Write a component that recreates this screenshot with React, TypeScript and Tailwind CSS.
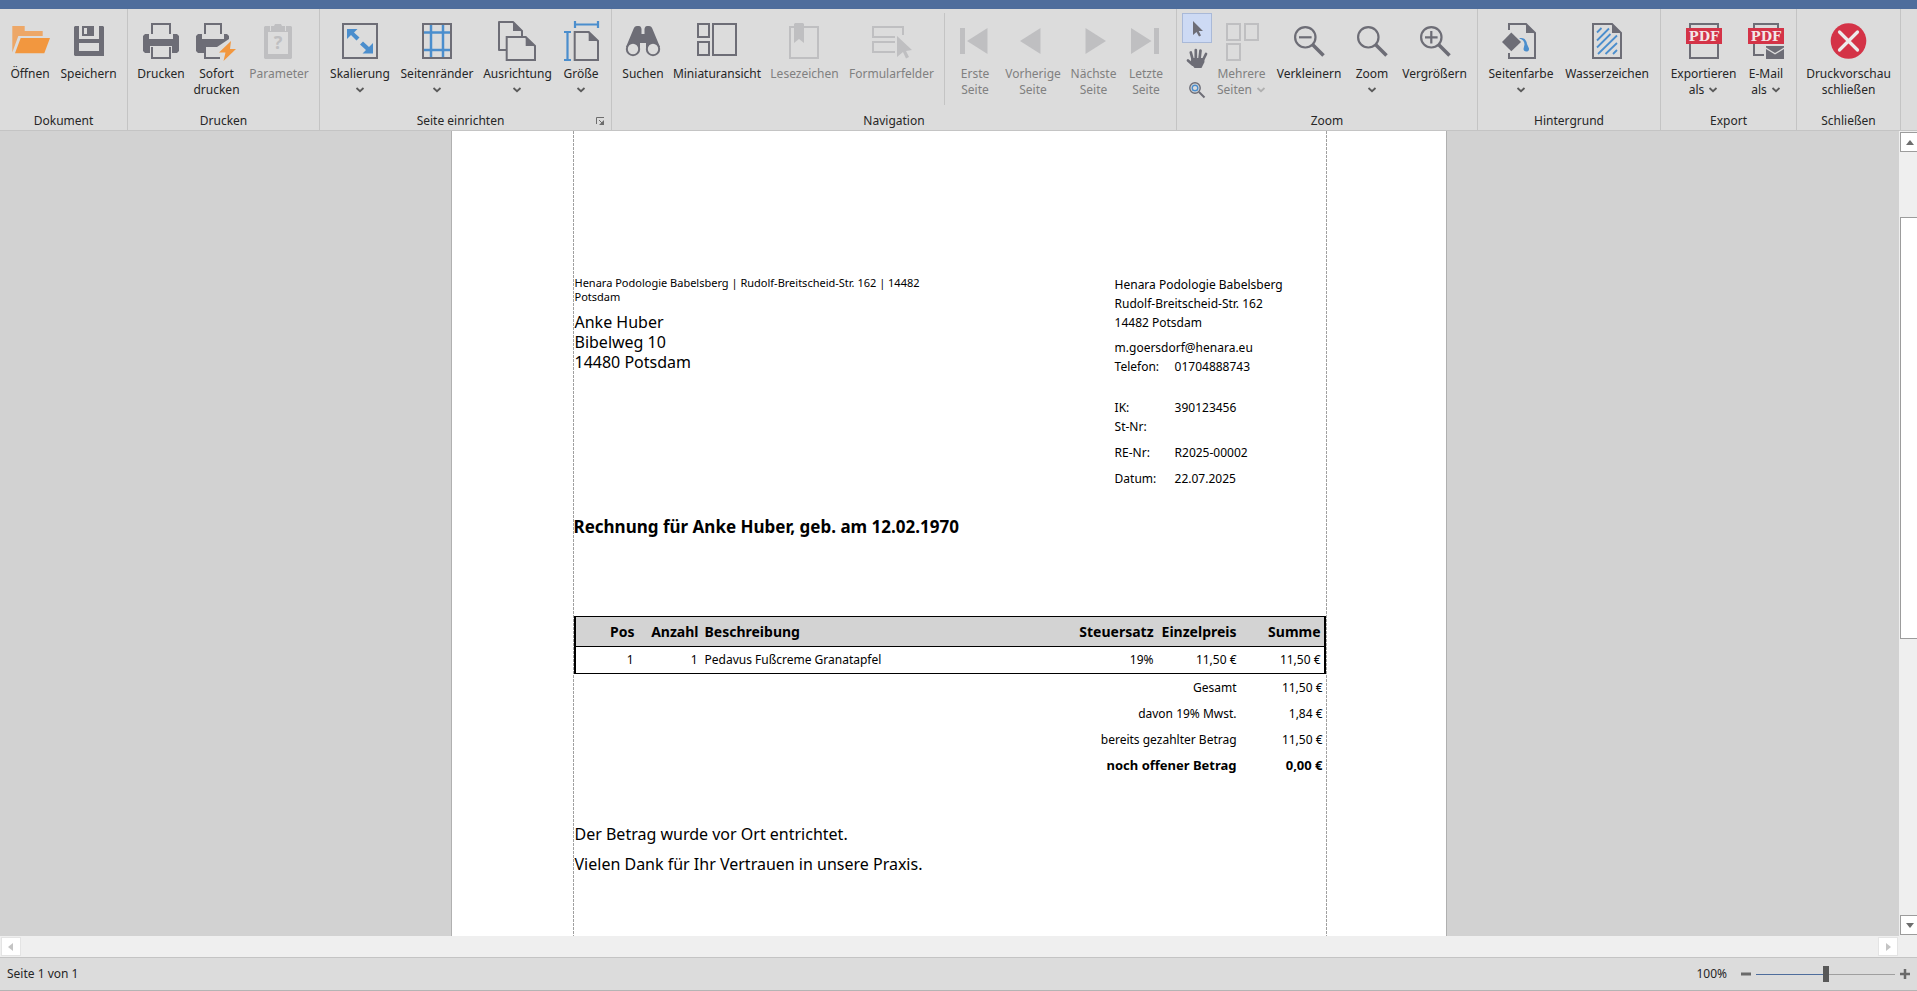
import React from "react";
import clsx from "clsx";

type Props = { children?: React.ReactNode };

const DARK = "#6d6d76";
const LIGHT = "#bfbfc1";
const BLUE = "#4b8ecd";
const RED = "#d43347";
const ORANGE = "#f2973f";

const Svg = ({ children }: Props) => (
  <svg
    viewBox="0 0 40 40"
    className="h-10 w-10 shrink-0 overflow-visible"
    fill="none"
    aria-hidden="true"
  >
    {children}
  </svg>
);

const OpenIcon = () => (
  <Svg>
    <path d="M2.3 5h12.4v5h18v5H8.3l-6 16.5z" fill="#eda767" />
    <path d="M10.7 17H40l-5.7 15.3H5z" fill={ORANGE} />
  </Svg>
);

const SaveIcon = () => (
  <Svg>
    <path
      fill={DARK}
      fillRule="evenodd"
      d="M6 5h4v13h20V5h4l1 1v29H6l-1-1V6zM10 22v8h20v-8z"
    />
    <path fill={DARK} fillRule="evenodd" d="M13 5h12v10H13zM15 7v6h3V7z" />
  </Svg>
);

const PrintIcon = () => (
  <Svg>
    <path d="M11 13V3h18v10" stroke={DARK} strokeWidth="2" />
    <path
      fill={DARK}
      fillRule="evenodd"
      d="M4 13h4v5h24v-5h4l2 2v15l-2 2h-5v-7H9v7H4l-2-2V15z"
    />
    <path d="M11 26v11h18V26" stroke={DARK} strokeWidth="2" />
  </Svg>
);

const QuickPrintIcon = () => (
  <Svg>
    <path d="M8 13V3h16v10" stroke={DARK} strokeWidth="2" />
    <path
      fill={DARK}
      d="M1 13h4v5h22v-5h3l2 2v3l-12 8H7v6H1l-2-2V15z"
    />
    <path d="M8 26v11h15" stroke={DARK} strokeWidth="2" />
    <path d="M34 20 22 31.500h6.500L26.500 40 39 28h-6z" fill={ORANGE} />
  </Svg>
);

const ParameterIcon = () => (
  <Svg>
    <path
      fill={LIGHT}
      fillRule="evenodd"
      d="M6 5h5v5h16V5h5l1 1v31l-1 1H6l-1-1V6zM9 11v22h20V11z"
    />
    <path fill={LIGHT} d="M12 5h3l1-2h6l1 2h3v5H12z" />
    <text
      x="19"
      y="28"
      textAnchor="middle"
      fill={LIGHT}
      className="font-['Noto_Sans',sans-serif] text-[18px] font-bold"
    >
      ?
    </text>
  </Svg>
);

const ScaleIcon = () => (
  <Svg>
    <rect x="3" y="3" width="34" height="34" stroke={DARK} strokeWidth="2" />
    <path
      fill={BLUE}
      d="M7 8h10.500l-3.500 3.500 5.500 5-3 3-5.500-5.500L7 18zM33 32.500H22.500l3.500-3.500-6-5.500 3-3 6 5.500 4-4z"
    />
  </Svg>
);

const MarginsIcon = () => (
  <Svg>
    <path
      d="M14 3v34M26 3v34M6 11.500h28M6 29h28"
      stroke={BLUE}
      strokeWidth="2.500"
    />
    <rect x="6" y="3" width="28" height="34" stroke={DARK} strokeWidth="2" />
  </Svg>
);

const OrientationIcon = () => (
  <Svg>
    <path
      d="M9 29H1V1h14l9 9v6"
      stroke={DARK}
      strokeWidth="2"
      strokeLinejoin="round"
    />
    <path d="M15 1v9h9z" fill={DARK} />
    <path d="M8.700 16h19L37 25v14H8.700z" stroke={DARK} strokeWidth="2" />
    <path d="M27.700 16v9H37z" fill={DARK} />
  </Svg>
);

const SizeIcon = () => (
  <Svg>
    <path d="M13.700 11h14L37 20v19H13.700z" stroke={DARK} strokeWidth="2" />
    <path d="M27.700 11v9H37z" fill={DARK} />
    <path
      d="M14 0v7M37 0v7M14 3.500h23M3 11h7M3 39h7M6.500 11v28"
      stroke={BLUE}
      strokeWidth="2.200"
    />
  </Svg>
);

const SearchIcon = () => (
  <Svg>
    <path
      fill={DARK}
      d="M3 26 10.500 8Q11.500 5 14 5h2q2 0 2.500 3v5h3V8q.5-3 2.500-3h2q2.500 0 3.500 3L37 26l-14 1v-5h-6v5z"
    />
    <circle cx="10" cy="28" r="6.200" fill="#dcdcdc" stroke={DARK} strokeWidth="2" />
    <circle cx="30" cy="28" r="6.200" fill="#dcdcdc" stroke={DARK} strokeWidth="2" />
  </Svg>
);

const ThumbnailsIcon = () => (
  <Svg>
    <g stroke={DARK} strokeWidth="2">
      <rect x="1" y="3" width="11" height="13" />
      <rect x="1" y="21" width="11" height="13" />
      <rect x="16" y="3" width="23" height="31" />
    </g>
  </Svg>
);

const BookmarkIcon = () => (
  <Svg>
    <rect x="5" y="6" width="28" height="31" stroke={LIGHT} strokeWidth="2" />
    <path d="M9 3l1-1h8l1 1v19l-5-4-5 4z" fill={LIGHT} />
  </Svg>
);

const FormFieldsIcon = () => (
  <Svg>
    <path
      d="M31 14V6H1v10h22M23 21H1v10h22"
      stroke={LIGHT}
      strokeWidth="2"
    />
    <path d="M25 15l15 14-6 1 3 6-3 1.500-3-6.500-6 5z" fill={LIGHT} />
  </Svg>
);

const FirstIcon = () => (
  <Svg>
    <path d="M5 7h5v26H5zM32.500 7v26L12 20z" fill={LIGHT} />
  </Svg>
);

const PrevIcon = () => (
  <Svg>
    <path d="M27.500 7v26L7 20z" fill={LIGHT} />
  </Svg>
);

const NextIcon = () => (
  <Svg>
    <path d="M11.500 7v26L32 20z" fill={LIGHT} />
  </Svg>
);

const LastIcon = () => (
  <Svg>
    <path d="M5 7v26l20.500-13zM28 7h5v26h-5z" fill={LIGHT} />
  </Svg>
);

const ManyPagesIcon = () => (
  <Svg>
    <g stroke={LIGHT} strokeWidth="2">
      <rect x="5" y="3" width="13" height="16" />
      <rect x="23" y="3" width="13" height="16" />
      <rect x="5" y="23" width="13" height="16" />
    </g>
  </Svg>
);

const LensIcon = ({ sign = "" }: { sign?: string }) => (
  <Svg>
    <circle cx="16.300" cy="16.300" r="10.200" stroke={DARK} strokeWidth="2.200" />
    <path d="M23.500 23.500 34.500 34.500" stroke={DARK} strokeWidth="3.600" />
    {sign && <path d={sign} stroke={DARK} strokeWidth="2.200" />}
  </Svg>
);

const PageColorIcon = () => (
  <Svg>
    <path d="M8 9V3h17l9 9v25H8v-5" stroke={DARK} strokeWidth="2" />
    <path d="M25 3v9h9z" fill={DARK} />
    <path d="M10.300 11.500 20 21l-9.700 9.300L1 21z" fill={DARK} />
    <path
      d="M18 17.500c5-1.500 7.500 1.500 8 5.500l2 4.500c.5 4-5.500 4-5.500.5l1-4.500c0-3.500-2-5.500-5.500-6z"
      fill={BLUE}
    />
  </Svg>
);

const WatermarkIcon = () => (
  <Svg>
    <path d="M6 3h19l9 9v25H6z" stroke={DARK} strokeWidth="2" />
    <path d="M25 3v9h9z" fill={DARK} />
    <path
      d="M10 11.500 14.500 7M10 19.500 22 7.500M10 26.500 23.500 13M11 33 30 14.500M18.500 33 30 22M26 33l4-4"
      stroke={BLUE}
      strokeWidth="1.800"
    />
  </Svg>
);

const PdfBadge = () => (
  <>
    <rect x="2" y="7" width="36" height="16" fill={RED} />
    <text
      x="20"
      y="20"
      textAnchor="middle"
      fill="#f3e6e7"
      className="font-['DejaVu_Serif',serif] text-[13px] font-bold"
    >
      PDF
    </text>
  </>
);

const ExportIcon = () => (
  <Svg>
    <rect x="6" y="3" width="28" height="34" stroke={DARK} strokeWidth="2" />
    <PdfBadge />
  </Svg>
);

const MailIcon = () => (
  <Svg>
    <path d="M32 8V3H8v31h10" stroke={DARK} strokeWidth="2" />
    <PdfBadge />
    <path d="M20 28l9 5.500 9-5.500v10H20z" fill={DARK} />
    <path d="M20 25h18v1.500l-9 5.500-9-5.500z" fill={DARK} />
  </Svg>
);

const CloseIcon = () => (
  <Svg>
    <circle cx="19.500" cy="20" r="17.800" fill={RED} />
    <path
      d="M10.500 11l18 18M28.500 11l-18 18"
      stroke="#ececec"
      strokeWidth="3.200"
      strokeLinecap="round"
    />
  </Svg>
);

const Chevron = () => (
  <svg viewBox="0 0 10 6" className="h-[6px] w-[10px]" fill="none" aria-hidden="true">
    <path d="M1.500 1 5 4.200 8.500 1" stroke="currentColor" strokeWidth="1.800" />
  </svg>
);

type RibbonButtonProps = {
  icon: React.ReactNode;
  label: string;
  second?: string;
  menu?: boolean;
  disabled?: boolean;
  className: string;
};

const RibbonButton = ({ icon, label, second, menu, disabled, className }: RibbonButtonProps) => (
  <button
    type="button"
    disabled={disabled}
    className={clsx(
      "flex shrink-0 flex-col items-center gap-[5px] pt-2 whitespace-nowrap",
      disabled ? "text-[#808080]" : "text-[#262626]",
      className
    )}
  >
    {icon}
    <span className="flex flex-col items-center">
      <span>{label}</span>
      {(second || menu) && (
        <span className="flex h-4 items-center gap-1">
          {second}
          {menu && (
            <span className={disabled ? "text-[#b0b0b0]" : "text-[#5a5a5a]"}>
              <Chevron />
            </span>
          )}
        </span>
      )}
    </span>
  </button>
);

const Group = ({ title, children, launcher }: Props & { title: string; launcher?: boolean }) => (
  <section
    aria-label={title}
    className="flex shrink-0 flex-col justify-between border-r border-[#c4c4c4] px-[5px] pt-1 pb-px"
  >
    <div className="flex items-start">{children}</div>
    <div className="flex items-center">
      <span className="grow text-center">{title}</span>
      {launcher && (
        <button type="button" aria-label="Seite einrichten öffnen" className="pr-[2px] text-[#6d6d6d]">
          <svg viewBox="0 0 8 8" className="h-2 w-2" fill="none" aria-hidden="true">
            <path d="M.5 7V.5H8M3 3l3 3" stroke="currentColor" />
            <path d="M8 3v5H3z" fill="currentColor" />
          </svg>
        </button>
      )}
    </div>
  </section>
);

const Ribbon = () => (
  <header className="flex h-[122px] shrink-0 overflow-hidden border-b border-[#c4c4c4] bg-[#dcdcdc]">
    <Group title="Dokument">
      <RibbonButton icon={<OpenIcon />} label="Öffnen" className="w-[50px]" />
      <RibbonButton icon={<SaveIcon />} label="Speichern" className="w-[67px]" />
    </Group>
    <Group title="Drucken">
      <RibbonButton icon={<PrintIcon />} label="Drucken" className="w-[56px]" />
      <RibbonButton icon={<QuickPrintIcon />} label="Sofort" second="drucken" className="w-[55px]" />
      <RibbonButton icon={<ParameterIcon />} label="Parameter" disabled className="w-[70px]" />
    </Group>
    <Group title="Seite einrichten" launcher>
      <RibbonButton icon={<ScaleIcon />} label="Skalierung" menu className="w-[70px]" />
      <RibbonButton icon={<MarginsIcon />} label="Seitenränder" menu className="w-[84px]" />
      <RibbonButton icon={<OrientationIcon />} label="Ausrichtung" menu className="w-[77px]" />
      <RibbonButton icon={<SizeIcon />} label="Größe" menu className="w-[50px]" />
    </Group>
    <Group title="Navigation">
      <RibbonButton icon={<SearchIcon />} label="Suchen" className="w-[52px]" />
      <RibbonButton icon={<ThumbnailsIcon />} label="Miniaturansicht" className="w-[96px]" />
      <RibbonButton icon={<BookmarkIcon />} label="Lesezeichen" disabled className="w-[79px]" />
      <RibbonButton icon={<FormFieldsIcon />} label="Formularfelder" disabled className="w-[95px]" />
      <div className="mx-[5px] h-[92px] w-px bg-[#c4c4c4]" />
      <RibbonButton icon={<FirstIcon />} label="Erste" second="Seite" disabled className="w-[50px]" />
      <RibbonButton icon={<PrevIcon />} label="Vorherige" second="Seite" disabled className="w-[66px]" />
      <RibbonButton icon={<NextIcon />} label="Nächste" second="Seite" disabled className="w-[55px]" />
      <RibbonButton icon={<LastIcon />} label="Letzte" second="Seite" disabled className="w-[50px]" />
    </Group>
    <Group title="Zoom">
      <div className="flex flex-col">
        <button
          type="button"
          aria-label="Mauszeiger"
          aria-pressed="true"
          className="h-[30px] w-[30px] border border-[#a9b9d8] bg-[#cddaf4]"
        >
          <svg viewBox="0 0 28 28" className="h-7 w-7" aria-hidden="true">
            <path d="M10 7v14l3.500-3 2.500 4.500 2-1-2.300-4.500H20z" fill={DARK} />
          </svg>
        </button>
        <button type="button" aria-label="Handwerkzeug" className="h-[30px] w-[30px]">
          <svg viewBox="0 0 30 30" className="h-[30px] w-[30px]" aria-hidden="true">
            <path
              d="M10.800 17 8.800 9.500M13.800 16V7M17.500 16l1-8.500M20.500 18l3.500-7M10.500 21.500 6 17.500"
              stroke={DARK}
              strokeWidth="2.700"
              strokeLinecap="round"
            />
            <path d="M9.500 15h12.500l.5 4-3 6h-7L8.500 20z" fill={DARK} />
          </svg>
        </button>
        <button type="button" aria-label="Lupe" className="h-[30px] w-[30px]">
          <svg viewBox="0 0 30 30" className="h-[30px] w-[30px]" fill="none" aria-hidden="true">
            <circle cx="13" cy="15" r="5.200" stroke={DARK} strokeWidth="1.400" />
            <circle cx="13" cy="15" r="2.800" stroke={BLUE} strokeWidth="1.400" />
            <path d="M17 19l5.500 5.500" stroke={DARK} strokeWidth="2" />
          </svg>
        </button>
      </div>
      <RibbonButton icon={<ManyPagesIcon />} label="Mehrere" second="Seiten" menu disabled className="w-[59px]" />
      <RibbonButton icon={<LensIcon sign="M10 16.300h12.600" />} label="Verkleinern" className="w-[76px]" />
      <RibbonButton icon={<LensIcon />} label="Zoom" menu className="w-[50px]" />
      <RibbonButton icon={<LensIcon sign="M10 16.300h12.600M16.300 10v12.600" />} label="Vergrößern" className="w-[75px]" />
    </Group>
    <Group title="Hintergrund">
      <RibbonButton icon={<PageColorIcon />} label="Seitenfarbe" menu className="w-[76px]" />
      <RibbonButton icon={<WatermarkIcon />} label="Wasserzeichen" className="w-[96px]" />
    </Group>
    <Group title="Export">
      <RibbonButton icon={<ExportIcon />} label="Exportieren" second="als" menu className="w-[75px]" />
      <RibbonButton icon={<MailIcon />} label="E-Mail" second="als" menu className="w-[50px]" />
    </Group>
    <Group title="Schließen">
      <RibbonButton icon={<CloseIcon />} label="Druckvorschau" second="schließen" className="w-[93px]" />
    </Group>
  </header>
);

const Guide = () => (
  <div className="w-px shrink-0 bg-[repeating-linear-gradient(to_bottom,#a0a0a0_0_3px,transparent_3px_4px)]" />
);

const Fact = ({ name, value }: { name: string; value?: string }) => (
  <div className="flex">
    <dt className="w-[60px]">{name}</dt>
    <dd>{value}</dd>
  </div>
);

const Columns = () => (
  <colgroup>
    <col className="w-[63px]" />
    <col className="w-[64px]" />
    <col />
    <col className="w-[83px]" />
    <col className="w-[83px]" />
    <col className="w-[84px]" />
  </colgroup>
);

const totals = [
  { label: "Gesamt", amount: "11,50 €" },
  { label: "davon 19% Mwst.", amount: "1,84 €" },
  { label: "bereits gezahlter Betrag", amount: "11,50 €" },
];

const Invoice = () => (
  <article className="mx-auto flex w-[996px] shrink-0 border-x border-[#b0b0b0] bg-white pr-[119px] pl-[121px] text-[12px] leading-[19px] text-black">
    <Guide />
    <div className="grow pt-36">
      <div className="flex justify-between">
        <div className="pt-px pl-px">
          <p className="w-[360px] text-[11px] leading-[14px]">
            Henara Podologie Babelsberg | Rudolf-Breitscheid-Str. 162 | 14482 Potsdam
          </p>
          <address className="mt-2 text-[16px] leading-5 not-italic">
            Anke Huber
            <br />
            Bibelweg 10
            <br />
            14480 Potsdam
          </address>
        </div>
        <div className="w-[211px]">
          <p>Henara Podologie Babelsberg</p>
          <p>Rudolf-Breitscheid-Str. 162</p>
          <p>14482 Potsdam</p>
          <p className="mt-[6px]">m.goersdorf@henara.eu</p>
          <dl>
            <Fact name="Telefon:" value="01704888743" />
          </dl>
          <dl className="mt-[22px]">
            <Fact name="IK:" value="390123456" />
            <Fact name="St-Nr:" />
          </dl>
          <dl className="mt-[7px] flex flex-col gap-[7px]">
            <Fact name="RE-Nr:" value="R2025-00002" />
            <Fact name="Datum:" value="22.07.2025" />
          </dl>
        </div>
      </div>
      <h1 className="mt-[27px] text-[17px] leading-6 font-bold">
        Rechnung für Anke Huber, geb. am 12.02.1970
      </h1>
      <div className="mt-[77px] border-x-2 border-y border-black">
        <table className="w-full table-fixed text-right">
          <Columns />
          <thead className="border-b border-black bg-[#d3d3d3] text-[14px]">
            <tr className="h-[29px]">
              <th className="px-1">Pos</th>
              <th className="px-1">Anzahl</th>
              <th className="px-[2px] text-left">Beschreibung</th>
              <th className="px-[3px]">Steuersatz</th>
              <th className="px-[3px]">Einzelpreis</th>
              <th className="px-[3px]">Summe</th>
            </tr>
          </thead>
          <tbody>
            <tr className="h-[27px]">
              <td className="px-[5px]">1</td>
              <td className="px-[5px]">1</td>
              <td className="px-[2px] text-left">Pedavus Fußcreme Granatapfel</td>
              <td className="px-[3px]">19%</td>
              <td className="px-[3px]">11,50 €</td>
              <td className="px-[3px]">11,50 €</td>
            </tr>
          </tbody>
        </table>
      </div>
      <table className="ml-auto text-right">
        <tbody>
          {totals.map((row) => (
            <tr key={row.label} className="h-[26px]">
              <th className="pr-1 font-normal">{row.label}</th>
              <td className="w-[85px] pr-[3px]">{row.amount}</td>
            </tr>
          ))}
          <tr className="h-[26px] text-[13px] font-bold">
            <th className="pr-1">noch offener Betrag</th>
            <td className="w-[85px] pr-[3px]">0,00 €</td>
          </tr>
        </tbody>
      </table>
      <div className="mt-[41px] pl-px text-[16px] leading-[30px]">
        <p>Der Betrag wurde vor Ort entrichtet.</p>
        <p>Vielen Dank für Ihr Vertrauen in unsere Praxis.</p>
      </div>
    </div>
    <Guide />
  </article>
);

const VerticalScroll = () => (
  <div className="flex w-[18px] shrink-0 flex-col overflow-hidden bg-[#efefef] pt-px pb-px pl-px">
    <button
      type="button"
      aria-label="Nach oben"
      className="flex h-5 w-5 shrink-0 items-center border border-[#9c9c9c] bg-white pl-[5px]"
    >
      <svg viewBox="0 0 8 5" className="h-[5px] w-2" aria-hidden="true">
        <path d="M4 0 8 5H0z" fill="#6d6d6d" />
      </svg>
    </button>
    <div className="grow-[65]" />
    <div className="w-5 grow-[421] border border-[#9c9c9c] bg-white" />
    <div className="grow-[277]" />
    <button
      type="button"
      aria-label="Nach unten"
      className="flex h-5 w-5 shrink-0 items-center border border-[#9c9c9c] bg-white pl-[5px]"
    >
      <svg viewBox="0 0 8 5" className="h-[5px] w-2" aria-hidden="true">
        <path d="M0 0h8L4 5z" fill="#6d6d6d" />
      </svg>
    </button>
  </div>
);

const HorizontalScroll = () => (
  <div className="flex h-[21px] shrink-0 items-center justify-between bg-[#efefef] pr-[19px] pl-px">
    <button
      type="button"
      disabled
      aria-label="Nach links"
      className="flex h-[19px] w-5 items-center border border-[#e4e4e4] bg-white pl-[6px]"
    >
      <svg viewBox="0 0 5 8" className="h-2 w-[5px]" aria-hidden="true">
        <path d="M5 0v8L0 4z" fill="#c4c4c4" />
      </svg>
    </button>
    <button
      type="button"
      disabled
      aria-label="Nach rechts"
      className="flex h-[19px] w-5 items-center justify-center border border-[#e4e4e4] bg-white"
    >
      <svg viewBox="0 0 5 8" className="h-2 w-[5px]" aria-hidden="true">
        <path d="M0 0v8l5-4z" fill="#c4c4c4" />
      </svg>
    </button>
  </div>
);

const StatusBar = () => (
  <footer className="flex h-[34px] shrink-0 items-center justify-between border-y border-t-[#c4c4c4] border-b-[#b4b4b4] bg-[#dcdcdc] pr-[7px] pl-[7px] text-[#262626]">
    <span>Seite 1 von 1</span>
    <div className="flex items-center">
      <label htmlFor="zoom" className="mr-[14px]">
        100%
      </label>
      <button type="button" aria-label="Kleiner">
        <svg viewBox="0 0 10 10" className="h-[10px] w-[10px]" aria-hidden="true">
          <path d="M0 5h10" stroke="#6a6a6a" strokeWidth="3" />
        </svg>
      </button>
      <input
        id="zoom"
        type="range"
        min={0}
        max={200}
        defaultValue={100}
        className="mx-[5px] h-4 w-[139px] appearance-none bg-[linear-gradient(to_right,#4e6d9c_50%,#9f9f9f_50%)] bg-[length:100%_1px] bg-center bg-no-repeat [&::-webkit-slider-thumb]:h-4 [&::-webkit-slider-thumb]:w-[6px] [&::-webkit-slider-thumb]:appearance-none [&::-webkit-slider-thumb]:bg-[#585858]"
      />
      <button type="button" aria-label="Größer">
        <svg viewBox="0 0 10 10" className="h-[10px] w-[10px]" aria-hidden="true">
          <path d="M0 5h10M5 0v10" stroke="#6a6a6a" strokeWidth="2.500" />
        </svg>
      </button>
    </div>
  </footer>
);

const App = () => {
  return (
    <div className="flex h-screen flex-col overflow-hidden bg-[#d2d2d2] font-['Noto_Sans',sans-serif] text-[12px] leading-4 text-[#262626]">
      <div className="h-[9px] shrink-0 bg-[#4e6d9c]" />
      <Ribbon />
      <main className="flex min-h-0 grow">
        <div className="flex min-w-0 grow overflow-hidden pr-[2px]">
          <Invoice />
        </div>
        <VerticalScroll />
      </main>
      <HorizontalScroll />
      <StatusBar />
    </div>
  );
};

export default App;
